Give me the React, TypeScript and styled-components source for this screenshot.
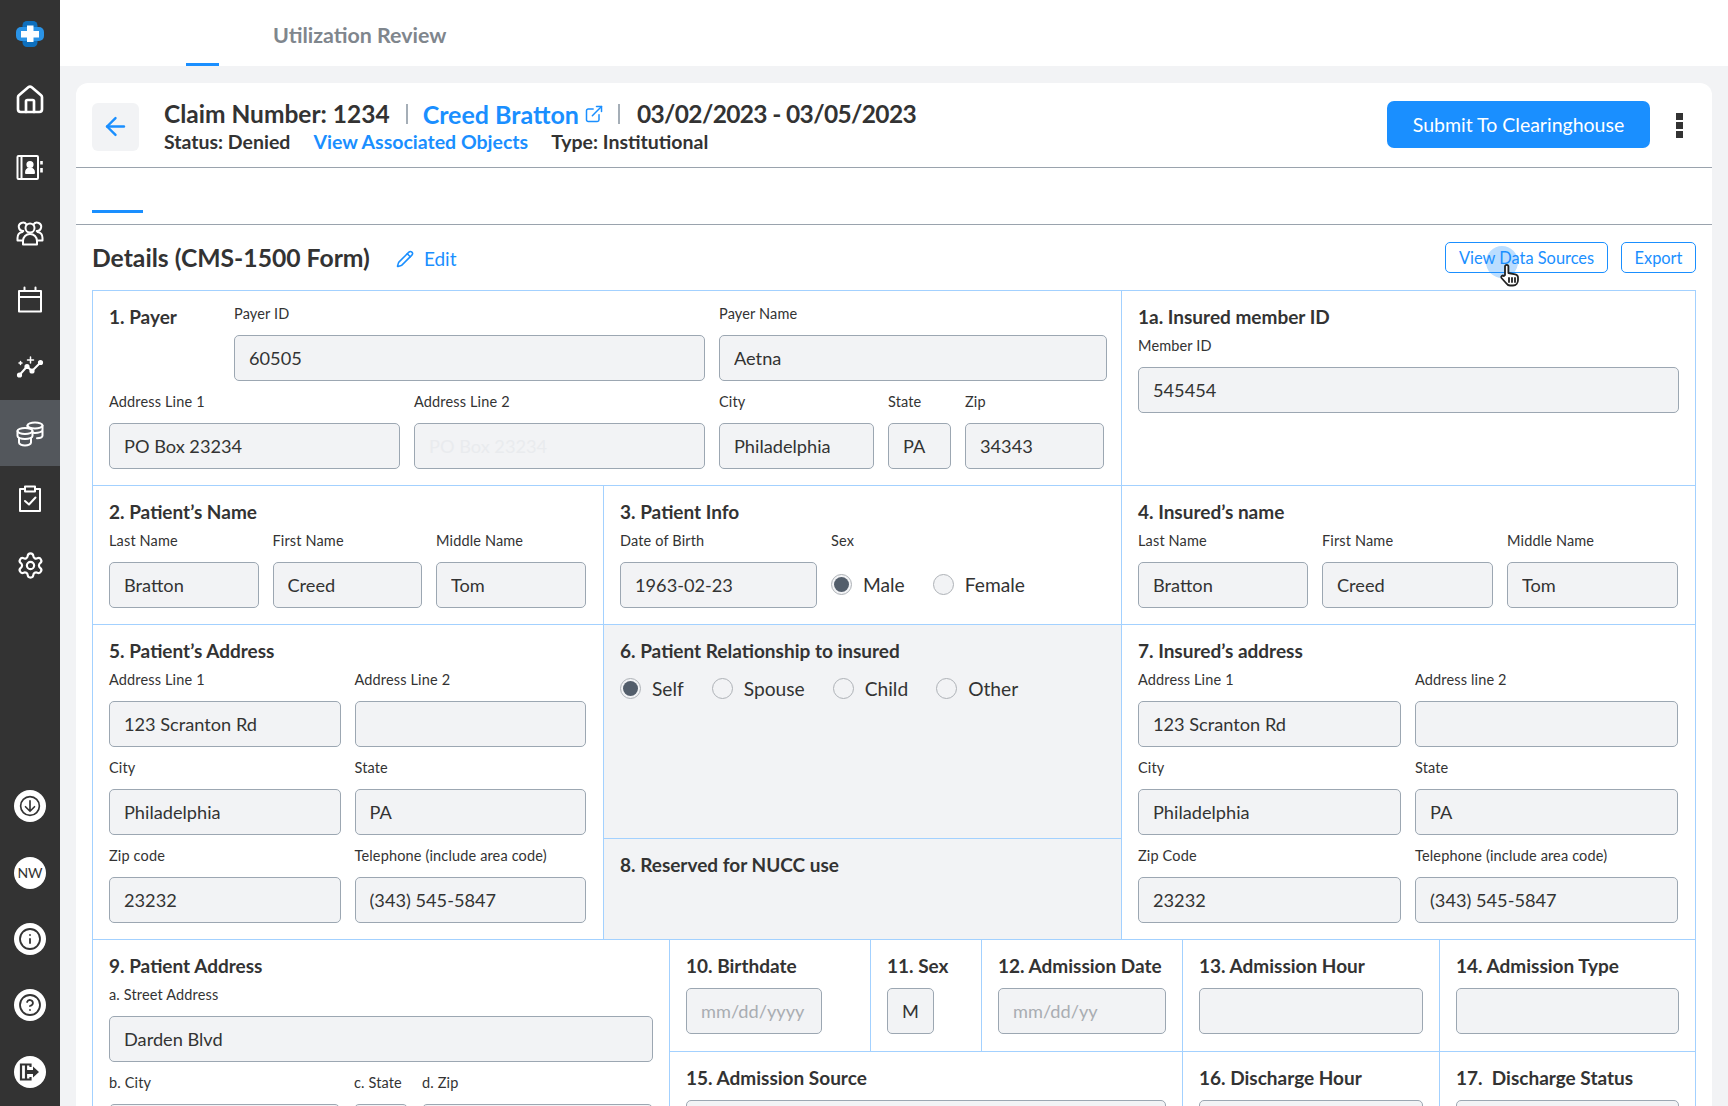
import React from "react";
import styled, { createGlobalStyle } from "styled-components";
import { ArrowLeft, ExternalLink, Pencil, Info, CircleHelp, House, Settings } from "lucide-react";

const Global = createGlobalStyle`
  *, *::before, *::after { box-sizing: border-box; }
  html, body { margin: 0; padding: 0; }
  body { font-family: "Lato", "Open Sans", Arial, sans-serif; color: #333; background: #f2f3f5; }
`;

const BLUE = "#1a8fff";
const LINE = "#a3d1ff";

const Page = styled.div`
  display: flex;
  height: 1106px;
  overflow: hidden;
`;
const Sidebar = styled.aside`
  width: 60px;
  flex: none;
  background: #333;
  display: flex;
  flex-direction: column;
`;
const LogoSlot = styled.div`
  height: 67px;
  display: flex;
  align-items: center;
  justify-content: center;
`;
const NavItem = styled.div<{ $active?: boolean }>`
  height: 66.5px;
  display: flex;
  align-items: center;
  justify-content: center;
  color: #fff;
  background: ${(p) => (p.$active ? "#53575c" : "transparent")};
`;
const SideBottom = styled.div`
  margin-top: auto;
  padding-bottom: 1px;
`;
const RoundSlot = styled.div`
  height: 66.4px;
  display: flex;
  align-items: center;
  justify-content: center;
`;
const Round = styled.div`
  width: 32px;
  height: 32px;
  border-radius: 50%;
  background: #fff;
  color: #333;
  display: flex;
  align-items: center;
  justify-content: center;
  font-size: 14px;
  font-weight: 400;
`;
const Main = styled.div`
  flex: 1;
  min-width: 0;
  display: flex;
  flex-direction: column;
`;
const TopBar = styled.header`
  height: 66px;
  flex: none;
  background: #fff;
  display: flex;
  align-items: stretch;
  padding-left: 126px;
`;
const BlankTab = styled.div`
  width: 33px;
  border-bottom: 3px solid ${BLUE};
`;
const TopTab = styled.div`
  margin-left: 54px;
  font-size: 21.4px;
  font-weight: 700;
  color: #7f868d;
  line-height: 70px;
`;
const Content = styled.div`
  flex: 1;
  padding: 17px 16px 0;
`;
const Card = styled.div`
  background: #fff;
  border-radius: 12px 12px 0 0;
  height: 100%;
  overflow: hidden;
`;
const CardHeader = styled.div`
  height: 85px;
  display: flex;
  align-items: center;
  padding: 0 29px 0 16px;
  border-bottom: 1px solid #9aa3ad;
`;
const BackButton = styled.div`
  width: 47px;
  height: 48px;
  margin-top: 3px;
  border-radius: 6px;
  background: #f2f3f5;
  color: ${BLUE};
  display: flex;
  align-items: center;
  justify-content: center;
  flex: none;
`;
const Titles = styled.div`
  margin: 2px 0 0 25px;
  flex: 1;
`;
const TitleLine = styled.div`
  display: flex;
  align-items: center;
  font-weight: 700;
  line-height: 30px;
`;
const ClaimText = styled.span`
  font-size: 24.5px;
`;
const DateText = styled.span`
  font-size: 24.5px;
  letter-spacing: -0.65px;
`;
const Sep = styled.span<{ $before: number; $after: number }>`
  width: 2px;
  height: 20px;
  background: #a5aeb7;
  margin: 0 ${(p) => p.$after}px 0 ${(p) => p.$before}px;
`;
const NameLink = styled.span`
  color: ${BLUE};
  font-size: 25px;
  display: inline-flex;
  align-items: center;
  gap: 5px;
`;
const SubLine = styled.div`
  display: flex;
  gap: 23px;
  font-size: 19.5px;
  font-weight: 700;
  line-height: 24px;
  margin-top: 1px;
`;
const SubLink = styled.span`
  color: ${BLUE};
`;
const Submit = styled.button`
  width: 263px;
  height: 47px;
  margin-bottom: 2px;
  border: 0;
  border-radius: 7px;
  background: ${BLUE};
  color: #fff;
  font: 400 19.5px "Lato", sans-serif;
  flex: none;
`;
const Kebab = styled.div`
  margin-left: 26px;
  display: flex;
  flex-direction: column;
  gap: 2px;
  span {
    width: 7px;
    height: 7px;
    background: #333;
  }
`;
const TabStrip = styled.div`
  height: 57px;
  padding: 42px 0 0 16px;
  border-bottom: 1px solid #9aa3ad;
`;
const TabMark = styled.div`
  width: 51px;
  height: 3px;
  background: ${BLUE};
`;
const DetailsBar = styled.div`
  height: 65px;
  display: flex;
  align-items: center;
  padding: 0 16px;
`;
const DetailsTitle = styled.h2`
  margin: 0;
  font-size: 24.7px;
  font-weight: 700;
  line-height: 30px;
`;
const EditLink = styled.span`
  display: inline-flex;
  align-items: center;
  gap: 10px;
  margin: 2px 0 0 26px;
  color: ${BLUE};
  font-size: 19px;
`;
const Actions = styled.div`
  margin-left: auto;
  display: flex;
  gap: 13px;
`;
const Outline = styled.button<{ $w: number }>`
  position: relative;
  width: ${(p) => p.$w}px;
  height: 31px;
  border: 1px solid ${BLUE};
  border-radius: 5px;
  background: #fff;
  color: ${BLUE};
  font: 400 16.4px "Lato", sans-serif;
  padding: 0;
`;
const CursorHalo = styled.span`
  position: absolute;
  left: 40px;
  top: 3px;
  width: 32px;
  height: 32px;
  border-radius: 50%;
  background: rgba(26, 143, 255, 0.3);
`;
const CursorHand = styled.svg`
  position: absolute;
  left: 52px;
  top: 19px;
`;
const Form = styled.div`
  margin: 0 16px;
  border: solid ${LINE};
  border-width: 1px 1px 0;
`;
const Row = styled.div<{ $h: number; $cols: string }>`
  height: ${(p) => p.$h}px;
  display: grid;
  grid-template-columns: ${(p) => p.$cols};
  border-bottom: 1px solid ${LINE};
`;
const Cell = styled.section<{ $gray?: boolean; $top?: number; $span?: number }>`
  padding: ${(p) => p.$top ?? 15}px 16px 0;
  background: ${(p) => (p.$gray ? "#f2f3f5" : "#fff")};
  border-right: 1px solid ${LINE};
  min-width: 0;
  ${(p) => (p.$span ? `grid-column: span ${p.$span};` : "")}
  &:last-child { border-right: 0; }
`;
const Stack = styled.div`
  display: grid;
  grid-template-rows: 213px 1fr;
  border-right: 1px solid ${LINE};
  min-width: 0;
`;
const StackCell = styled(Cell)`
  border-right: 0;
  & + & { border-top: 1px solid ${LINE}; }
`;
const Nested = styled.div`
  display: grid;
  grid-template-columns: 201px 111px 201px 257px 1fr;
  grid-template-rows: 112px 1fr;
  min-width: 0;
`;
const NestedCell = styled(Cell)`
  &:nth-child(-n + 5) { border-bottom: 1px solid ${LINE}; }
  &:nth-child(5) { border-right: 0; }
`;
const Heading = styled.h3<{ $drop?: number; $after?: number }>`
  margin: ${(p) => p.$drop ?? 0}px 0 ${(p) => p.$after ?? 8}px;
  font-size: 19px;
  line-height: 22px;
  font-weight: 700;
  color: #333;
`;
const Fields = styled.div<{ $cols: string }>`
  display: grid;
  grid-template-columns: ${(p) => p.$cols};
  column-gap: 14px;
  row-gap: 11px;
`;
const FieldWrap = styled.div<{ $w?: number; $full?: boolean }>`
  min-width: 0;
  ${(p) => (p.$w ? `width: ${p.$w}px;` : "")}
  ${(p) => (p.$full ? "grid-column: 1 / -1;" : "")}
`;
const Label = styled.div`
  font-size: 14.5px;
  letter-spacing: 0.15px;
  line-height: 20px;
  margin-bottom: 11px;
  color: #333;
  white-space: nowrap;
`;
const Input = styled.input<{ $faint?: boolean }>`
  display: block;
  width: 100%;
  height: 46px;
  padding: 0 14px;
  border: 1px solid #9ca7b2;
  border-radius: 5px;
  background: #f2f3f5;
  font: 400 18.2px "Lato", sans-serif;
  color: ${(p) => (p.$faint ? "#e9ebee" : "#333")};
  &::placeholder { color: #a9adb2; opacity: 1; }
  outline: none;
`;
const Radios = styled.div<{ $gap: number; $lift?: number }>`
  display: flex;
  align-items: center;
  gap: ${(p) => p.$gap}px;
  height: 46px;
  margin-top: ${(p) => -(p.$lift ?? 0)}px;
`;
const RadioItem = styled.label`
  display: inline-flex;
  align-items: center;
  gap: 11px;
  font-size: 19.2px;
  color: #333;
`;
const RadioMark = styled.span<{ $on?: boolean }>`
  width: 21px;
  height: 21px;
  border-radius: 50%;
  border: 1px solid #aeb2b7;
  background: #f2f3f5;
  display: flex;
  align-items: center;
  justify-content: center;
  &::after {
    content: "";
    width: 15px;
    height: 15px;
    border-radius: 50%;
    background: ${(p) => (p.$on ? "#535e6b" : "transparent")};
  }
`;
const PayerTop = styled.div`
  display: grid;
  grid-template-columns: 125px 471px 402px;
  margin-bottom: 11px;
`;
const PayerField = styled(FieldWrap)`
  & + & { margin-left: 14px; }
`;

const Field = ({ label, value, placeholder, faint, w, full }: { label?: string; value?: string; placeholder?: string; faint?: boolean; w?: number; full?: boolean }) => (
  <FieldWrap $w={w} $full={full}>
    {label && <Label>{label}</Label>}
    <Input readOnly defaultValue={value} placeholder={placeholder} $faint={faint} />
  </FieldWrap>
);
const Radio = ({ label, on }: { label: string; on?: boolean }) => (
  <RadioItem>
    <RadioMark $on={on} />
    {label}
  </RadioItem>
);

const Ic = ({ children, size = 32, sw = 2 }: { children: React.ReactNode; size?: number; sw?: number }) => (
  <svg width={size} height={size} viewBox="0 0 32 32" fill="none" stroke="currentColor" strokeWidth={sw} strokeLinecap="round" strokeLinejoin="round">
    {children}
  </svg>
);

const Logo = () => (
  <svg width="28" height="26" viewBox="0 0 28 26">
    <rect x="6.500" y="0" width="15" height="26" rx="4.500" fill="#0e6fbd" />
    <rect x="0" y="6" width="28" height="14" rx="5" fill="#2a93e6" />
    <path d="M11 4.500h6.500V10H23v6.500h-5.500V21H11v-4.500H5V10h6z" fill="#fff" />
  </svg>
);

const BookIcon = () => (
  <Ic>
    <rect x="3.500" y="5" width="20.500" height="23" rx="1" />
    <path d="M7.500 5v23" />
    <circle cx="16" cy="13.500" r="2.600" fill="currentColor" />
    <path d="M12 22c0-3 1.800-4.500 4-4.500s4 1.500 4 4.500z" fill="currentColor" />
    <path d="M27.500 10v3.500M27.500 17v4.500" strokeWidth="2.600" strokeLinecap="butt" />
  </Ic>
);
const PeopleIcon = () => (
  <Ic>
    <circle cx="16" cy="11" r="4.500" />
    <path d="M9 27.500v-3.500c0-4 3-7 7-7s7 3 7 7v3.500z" />
    <path d="M12.500 7.500a4.200 4.200 0 1 0-3.200 6.500M19.500 7.500a4.200 4.200 0 1 1 3.200 6.500" />
    <path d="M8.500 15C5.500 15.500 3.500 18 3.500 21v2.500h5M23.500 15c3 .5 5 3 5 6v2.500h-5" />
  </Ic>
);
const CalendarIcon = () => (
  <Ic>
    <rect x="5" y="7" width="22" height="20.500" />
    <path d="M5 13h22M10.500 3.500V7M21.500 3.500V7" />
  </Ic>
);
const TrendIcon = () => (
  <Ic>
    <path d="M5.500 25 13 16.500 18 21 26 13" />
    <circle cx="5.500" cy="25" r="1.600" fill="currentColor" />
    <circle cx="13" cy="16.500" r="1.600" fill="currentColor" />
    <circle cx="18" cy="21" r="1.600" fill="currentColor" />
    <circle cx="26.500" cy="12.500" r="1.600" fill="currentColor" />
    <path d="M16.500 7v6M13.500 10h6M6.500 11.500v3M5 13h3" strokeWidth="1.500" />
  </Ic>
);
const CoinsIcon = () => (
  <Ic>
    <ellipse cx="21" cy="8.500" rx="7.500" ry="3" />
    <path d="M13.500 8.500V11M28.500 8.500V18.500c0 1.500-2.500 2.600-5.500 2.800M19 15.700c.7.100 1.300.2 2 .2 3.500 0 6.500-1 7.500-2.400" />
    <ellipse cx="11" cy="14" rx="7.500" ry="3" fill="#53575c" />
    <path d="M3.500 14v5c0 1.600 3.300 3 7.500 3s7.500-1.400 7.500-3v-5" />
    <path d="M5 21v4.500c0 1.600 2.700 3 6 3s6-1.400 6-3V21" />
  </Ic>
);
const ClipIcon = () => (
  <Ic>
    <path d="M11 6H6v22h20V6h-5" />
    <rect x="11" y="3.500" width="10" height="5" />
    <path d="m11 18 4 3.500 6.500-7" />
  </Ic>
);
const DownloadIcon = () => (
  <Ic size={24} sw={2.2}>
    <circle cx="16" cy="16" r="12.500" />
    <path d="M16 9v14M10 17l6 6 6-6" />
  </Ic>
);
const ExitIcon = () => (
  <svg width="22" height="22" viewBox="0 0 22 22" fill="none" stroke="#333" strokeWidth="2.200">
    <path d="M11.500 6V3.500H2v15h9.500V16" strokeLinejoin="miter" />
    <path d="M7 3.500v15" />
    <path d="M8 9h6V5.500l6 5.500-6 5.500V13H8z" fill="#333" stroke="none" />
  </svg>
);

export default function App() {
  return (
    <>
      <Global />
      <Page>
        <Sidebar>
          <LogoSlot><Logo /></LogoSlot>
          <NavItem><House size={32} strokeWidth={2} /></NavItem>
          <NavItem><BookIcon /></NavItem>
          <NavItem><PeopleIcon /></NavItem>
          <NavItem><CalendarIcon /></NavItem>
          <NavItem><TrendIcon /></NavItem>
          <NavItem $active><CoinsIcon /></NavItem>
          <NavItem><ClipIcon /></NavItem>
          <NavItem><Settings size={29} strokeWidth={1.800} /></NavItem>
          <SideBottom>
            <RoundSlot><Round><DownloadIcon /></Round></RoundSlot>
            <RoundSlot><Round>NW</Round></RoundSlot>
            <RoundSlot><Round><Info size={24} strokeWidth={1.800} /></Round></RoundSlot>
            <RoundSlot><Round><CircleHelp size={24} strokeWidth={1.800} /></Round></RoundSlot>
            <RoundSlot><Round><ExitIcon /></Round></RoundSlot>
          </SideBottom>
        </Sidebar>
        <Main>
          <TopBar>
            <BlankTab />
            <TopTab>Utilization Review</TopTab>
          </TopBar>
          <Content>
            <Card>
              <CardHeader>
                <BackButton><ArrowLeft size={29} strokeWidth={2} /></BackButton>
                <Titles>
                  <TitleLine>
                    <ClaimText>Claim Number: 1234</ClaimText>
                    <Sep $before={16} $after={15} />
                    <NameLink>Creed Bratton <ExternalLink size={20} strokeWidth={1.800} /></NameLink>
                    <Sep $before={14} $after={17} />
                    <DateText>03/02/2023 - 03/05/2023</DateText>
                  </TitleLine>
                  <SubLine>
                    <span>Status: Denied</span>
                    <SubLink>View Associated Objects</SubLink>
                    <span>Type: Institutional</span>
                  </SubLine>
                </Titles>
                <Submit>Submit To Clearinghouse</Submit>
                <Kebab><span /><span /><span /></Kebab>
              </CardHeader>
              <TabStrip><TabMark /></TabStrip>
              <DetailsBar>
                <DetailsTitle>Details (CMS-1500 Form)</DetailsTitle>
                <EditLink><Pencil size={18} strokeWidth={2} />Edit</EditLink>
                <Actions>
                  <Outline $w={163}>
                    View Data Sources
                    <CursorHalo />
                    <CursorHand width="24" height="26" viewBox="0 0 24 24" fill="#fff" stroke="#222" strokeWidth="1.800" strokeLinecap="round" strokeLinejoin="round">
                      <path d="M7 12V3.500a1.700 1.700 0 0 1 3.400 0V10l6.800 1.300c1.500.3 2.800 1.500 2.800 3.200v2.500c0 3-2 5.500-5 5.500h-3c-2 0-3-1-4-2.500L3.500 15c-1-1.500 1-3.200 2.300-2z" />
                      <path d="M11 15v4M14 15v4M17 15v4" />
                    </CursorHand>
                  </Outline>
                  <Outline $w={75}>Export</Outline>
                </Actions>
              </DetailsBar>
              <Form>
                <Row $h={195} $cols="1029px 1fr">
                  <Cell $top={13}>
                    <PayerTop>
                      <Heading $drop={2}>1. Payer</Heading>
                      <PayerField><Field label="Payer ID" value="60505" /></PayerField>
                      <PayerField><Field label="Payer Name" value="Aetna" /></PayerField>
                    </PayerTop>
                    <Fields $cols="291px 291px 155px 63px 139px">
                      <Field label="Address Line 1" value="PO Box 23234" />
                      <Field label="Address Line 2" value="PO Box 23234" faint />
                      <Field label="City" value="Philadelphia" />
                      <Field label="State" value="PA" />
                      <Field label="Zip" value="34343" />
                    </Fields>
                  </Cell>
                  <Cell>
                    <Heading>1a. Insured member ID</Heading>
                    <Field label="Member ID" value="545454" />
                  </Cell>
                </Row>
                <Row $h={139} $cols="511px 518px 1fr">
                  <Cell>
                    <Heading>2. Patient’s Name</Heading>
                    <Fields $cols="149.500px 149.500px 149.500px">
                      <Field label="Last Name" value="Bratton" />
                      <Field label="First Name" value="Creed" />
                      <Field label="Middle Name" value="Tom" />
                    </Fields>
                  </Cell>
                  <Cell>
                    <Heading>3. Patient Info</Heading>
                    <Fields $cols="197px 1fr">
                      <Field label="Date of Birth" value="1963-02-23" />
                      <FieldWrap>
                        <Label>Sex</Label>
                        <Radios $gap={28} $lift={1}>
                          <Radio label="Male" on />
                          <Radio label="Female" />
                        </Radios>
                      </FieldWrap>
                    </Fields>
                  </Cell>
                  <Cell>
                    <Heading>4. Insured’s name</Heading>
                    <Fields $cols="170px 171px 171px">
                      <Field label="Last Name" value="Bratton" />
                      <Field label="First Name" value="Creed" />
                      <Field label="Middle Name" value="Tom" />
                    </Fields>
                  </Cell>
                </Row>
                <Row $h={315} $cols="511px 518px 1fr">
                  <Cell>
                    <Heading>5. Patient’s Address</Heading>
                    <Fields $cols="231.500px 231.500px">
                      <Field label="Address Line 1" value="123 Scranton Rd" />
                      <Field label="Address Line 2" />
                      <Field label="City" value="Philadelphia" />
                      <Field label="State" value="PA" />
                      <Field label="Zip code" value="23232" />
                      <Field label="Telephone (include area code)" value="(343) 545-5847" />
                    </Fields>
                  </Cell>
                  <Stack>
                    <StackCell $gray>
                      <Heading>6. Patient Relationship to insured</Heading>
                      <Radios $gap={28} $lift={5}>
                        <Radio label="Self" on />
                        <Radio label="Spouse" />
                        <Radio label="Child" />
                        <Radio label="Other" />
                      </Radios>
                    </StackCell>
                    <StackCell $gray>
                      <Heading>8. Reserved for NUCC use</Heading>
                    </StackCell>
                  </Stack>
                  <Cell>
                    <Heading>7. Insured’s address</Heading>
                    <Fields $cols="263px 263px">
                      <Field label="Address Line 1" value="123 Scranton Rd" />
                      <Field label="Address line 2" />
                      <Field label="City" value="Philadelphia" />
                      <Field label="State" value="PA" />
                      <Field label="Zip Code" value="23232" />
                      <Field label="Telephone (include area code)" value="(343) 545-5847" />
                    </Fields>
                  </Cell>
                </Row>
                <Row $h={260} $cols="577px 1fr">
                  <Cell>
                    <Heading>9. Patient Address</Heading>
                    <Fields $cols="231px 54px 231px">
                      <Field full label="a. Street Address" value="Darden Blvd" />
                      <Field label="b. City" />
                      <Field label="c. State" />
                      <Field label="d. Zip" />
                    </Fields>
                  </Cell>
                  <Nested>
                    <NestedCell><Heading $after={11}>10. Birthdate</Heading><Field w={136} placeholder="mm/dd/yyyy" /></NestedCell>
                    <NestedCell><Heading $after={11}>11. Sex</Heading><Field w={47} value="M" /></NestedCell>
                    <NestedCell><Heading $after={11}>12. Admission Date</Heading><Field placeholder="mm/dd/yy" /></NestedCell>
                    <NestedCell><Heading $after={11}>13. Admission Hour</Heading><Field /></NestedCell>
                    <NestedCell><Heading $after={11}>14. Admission Type</Heading><Field /></NestedCell>
                    <NestedCell $span={3}><Heading $after={11}>15. Admission Source</Heading><Field /></NestedCell>
                    <NestedCell><Heading $after={11}>16. Discharge Hour</Heading><Field /></NestedCell>
                    <NestedCell><Heading $after={11}>17.&nbsp; Discharge Status</Heading><Field /></NestedCell>
                  </Nested>
                </Row>
              </Form>
            </Card>
          </Content>
        </Main>
      </Page>
    </>
  );
}
